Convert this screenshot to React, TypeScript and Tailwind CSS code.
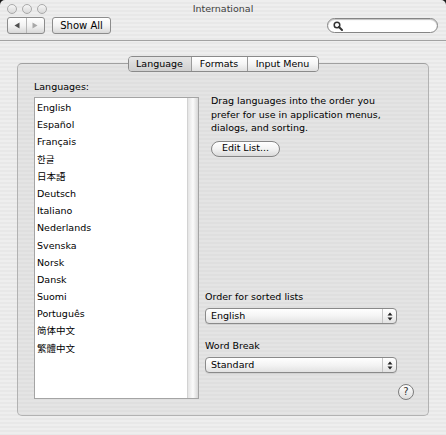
import React from "react";

const languages: { name: string; cls?: string }[] = [
  { name: "English" },
  { name: "Español" },
  { name: "Français" },
  { name: "한글", cls: "font-['Noto_Sans_CJK_KR',sans-serif]" },
  { name: "日本語", cls: "font-['Noto_Sans_CJK_JP',sans-serif]" },
  { name: "Deutsch" },
  { name: "Italiano" },
  { name: "Nederlands" },
  { name: "Svenska" },
  { name: "Norsk" },
  { name: "Dansk" },
  { name: "Suomi" },
  { name: "Português" },
  { name: "简体中文", cls: "font-['Noto_Sans_CJK_SC',sans-serif]" },
  { name: "繁體中文", cls: "font-['Noto_Sans_CJK_TC',sans-serif]" },
];

function Light() {
  return (
    <div className="w-[10px] h-[10px] rounded-full border border-[#a9a9a9] bg-gradient-to-b from-[#f6f6f6] to-[#d9d9d9]" />
  );
}

function UpDown() {
  return (
    <svg width="6" height="9" viewBox="0 0 6 9">
      <path d="M3 0.5 L5.5 3.5 L0.5 3.5 Z" fill="#222" />
      <path d="M3 8.5 L5.5 5.5 L0.5 5.5 Z" fill="#222" />
    </svg>
  );
}

function Select({ value }: { value: string }) {
  return (
    <div className="w-[192px] h-[16px] flex items-stretch border border-[#8a8a8a] rounded-[4px] bg-gradient-to-b from-[#ffffff] via-[#f4f4f4] to-[#e2e2e2] shadow-[0_1px_0_rgba(0,0,0,0.08)]">
      <div className="flex-1 pl-[5px] leading-[14px]">{value}</div>
      <div className="w-[14px] border-l border-[#c4c4c4] flex items-center justify-center">
        <UpDown />
      </div>
    </div>
  );
}

export default function App() {
  return (
    <div className="w-[446px] h-[435px] bg-[#1a1a1a] overflow-hidden">
      <div className="w-full h-full rounded-t-[5px] overflow-hidden flex flex-col text-[9.5px] text-black font-['DejaVu_Sans','Noto_Sans_CJK_SC',sans-serif] bg-[image:repeating-linear-gradient(180deg,#eeeeee_0px,#eeeeee_2px,#e8e8e8_2px,#e8e8e8_4px)]">
        {/* Title bar */}
        <div className="h-[16px] flex items-center">
          <div className="w-[47px] pl-[7px] flex gap-[5px] pt-[1px]">
            <Light />
            <Light />
            <Light />
          </div>
          <div className="flex-1 text-center text-[#404040] leading-[16px] pt-[1px]">International</div>
          <div className="w-[47px]" />
        </div>

        {/* Toolbar */}
        <div className="h-[25px] border-b border-[#a2a2a2] flex items-start pt-[1px] px-[7px]">
          <div className="w-[38px] h-[17px] flex border border-[#8c8c8c] rounded-[3px] bg-gradient-to-b from-[#ffffff] via-[#f3f3f3] to-[#d8d8d8]">
            <div className="flex-1 flex items-center justify-center border-r border-[#b5b5b5]">
              <svg width="6" height="7" viewBox="0 0 6 7">
                <path d="M0.5 3.5 L5.5 0.5 L5.5 6.5 Z" fill="#505050" />
              </svg>
            </div>
            <div className="flex-1 flex items-center justify-center">
              <svg width="6" height="7" viewBox="0 0 6 7">
                <path d="M5.5 3.5 L0.5 0.5 L0.5 6.5 Z" fill="#a8a8a8" />
              </svg>
            </div>
          </div>
          <div className="ml-[7px] w-[59px] h-[17px] flex items-center justify-center border border-[#8c8c8c] rounded-[3px] bg-gradient-to-b from-[#ffffff] via-[#f3f3f3] to-[#d8d8d8] text-[10px]">
            Show All
          </div>
          <div className="ml-auto mr-[1px] mt-[1px] w-[111px] h-[15px] flex items-center pl-[5px] rounded-full border border-[#858585] bg-white shadow-[inset_0_1px_1px_rgba(0,0,0,0.25)]">
            <svg width="10" height="10" viewBox="0 0 10 10">
              <circle cx="4" cy="4" r="2.8" fill="none" stroke="#333" strokeWidth="1.5" />
              <path d="M6 6 L9 9" stroke="#333" strokeWidth="2" strokeLinecap="round" />
            </svg>
          </div>
        </div>

        {/* Content */}
        <div className="flex-1 px-[17px] pt-[15px] flex flex-col">
          <div className="self-center relative z-10 -mb-[9px] h-[16px] flex border border-[#8a8a8a] rounded-[4px] overflow-hidden">
            <div className="w-[62px] flex items-center justify-center bg-gradient-to-b from-[#e6e6e6] to-[#cfcfcf]">Language</div>
            <div className="w-[56px] flex items-center justify-center border-l border-[#9a9a9a] bg-gradient-to-b from-[#ffffff] via-[#f5f5f5] to-[#e0e0e0]">Formats</div>
            <div className="w-[71px] flex items-center justify-center border-l border-[#9a9a9a] bg-gradient-to-b from-[#ffffff] via-[#f5f5f5] to-[#e0e0e0]">Input Menu</div>
          </div>

          <div className="h-[353px] flex border border-[#b2b2b2] border-t-[#a0a0a0] rounded-[5px] bg-[image:repeating-linear-gradient(180deg,#e4e4e4_0px,#e4e4e4_2px,#dfdfdf_2px,#dfdfdf_4px)]">
            {/* Left column */}
            <div className="pl-[16px] pt-[16px] flex flex-col">
              <div className="leading-[13px]">Languages:</div>
              <div className="mt-[4px] w-[165px] h-[302px] flex border border-[#a4a4a4] bg-white">
                <div className="flex-1 pt-[1px] pl-[2px]">
                  {languages.map((l) => (
                    <div key={l.name} className={`h-[17.2px] leading-[17.2px] ${l.cls ?? ""}`}>
                      {l.name}
                    </div>
                  ))}
                </div>
                <div className="w-[11px] border-l border-[#d2d2d2] bg-gradient-to-r from-[#e4e4e4] via-[#fbfbfb] to-[#d6d6d6]" />
              </div>
            </div>

            {/* Right column */}
            <div className="ml-[6px] flex-1 flex flex-col pr-[14px] pb-[15px] pt-[30px]">
              <div className="pl-[6px] leading-[13.5px]">
                Drag languages into the order you
                <br />
                prefer for use in application menus,
                <br />
                dialogs, and sorting.
              </div>
              <div className="ml-[6px] mt-[6px] w-[69px] h-[16px] flex items-center justify-center rounded-full border border-[#858585] bg-gradient-to-b from-[#ffffff] via-[#f3f3f3] to-[#dadada]">
                Edit List...
              </div>

              <div className="flex-1" />

              <div className="leading-[13px]">Order for sorted lists</div>
              <div className="mt-[5.5px]">
                <Select value="English" />
              </div>
              <div className="mt-[14.5px] leading-[13px]">Word Break</div>
              <div className="mt-[5.5px]">
                <Select value="Standard" />
              </div>
              <div className="mt-[11px] flex justify-end">
                <div className="w-[16px] h-[16px] rounded-full border border-[#7c7c7c] bg-gradient-to-b from-[#ffffff] to-[#dedede] flex items-center justify-center text-[10px] text-[#333] leading-none">
                  ?
                </div>
              </div>
            </div>
          </div>
        </div>
      </div>
    </div>
  );
}
